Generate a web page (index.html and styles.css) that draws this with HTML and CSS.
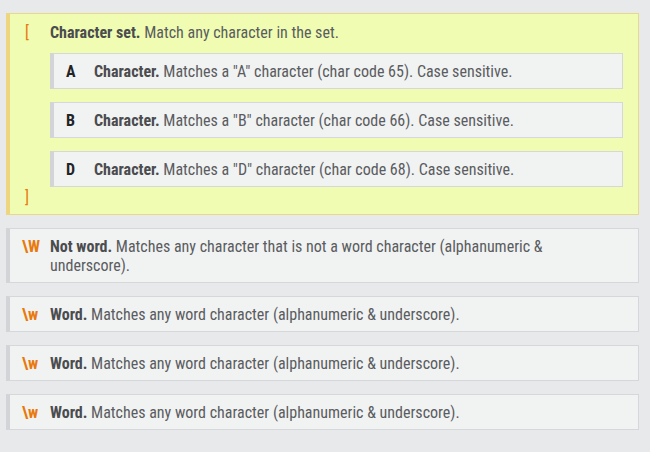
FILE: index.html
```html
<!DOCTYPE html>
<html>
<head>
<meta charset="utf-8">
<link rel="stylesheet" href="styles.css">
</head>
<body>
<div class="panel">
  <div class="token set">
    <div class="row">
      <span class="lbl sym">[</span>
      <span class="desc"><b>Character set.</b> Match any character in the set.</span>
    </div>
    <div class="children">
      <div class="token">
        <div class="row">
          <span class="lbl chr">A</span>
          <span class="desc"><b>Character.</b> Matches a "A" character (char code 65). Case sensitive.</span>
        </div>
      </div>
      <div class="token">
        <div class="row">
          <span class="lbl chr">B</span>
          <span class="desc"><b>Character.</b> Matches a "B" character (char code 66). Case sensitive.</span>
        </div>
      </div>
      <div class="token">
        <div class="row">
          <span class="lbl chr">D</span>
          <span class="desc"><b>Character.</b> Matches a "D" character (char code 68). Case sensitive.</span>
        </div>
      </div>
    </div>
    <div class="row close">
      <span class="lbl sym">]</span>
    </div>
  </div>
  <div class="token top">
    <div class="row">
      <span class="lbl sym">\W</span>
      <span class="desc"><b>Not word.</b> Matches any character that is not a word character (alphanumeric &amp; underscore).</span>
    </div>
  </div>
  <div class="token top">
    <div class="row">
      <span class="lbl sym">\w</span>
      <span class="desc"><b>Word.</b> Matches any word character (alphanumeric &amp; underscore).</span>
    </div>
  </div>
  <div class="token top">
    <div class="row">
      <span class="lbl sym">\w</span>
      <span class="desc"><b>Word.</b> Matches any word character (alphanumeric &amp; underscore).</span>
    </div>
  </div>
  <div class="token top">
    <div class="row">
      <span class="lbl sym">\w</span>
      <span class="desc"><b>Word.</b> Matches any word character (alphanumeric &amp; underscore).</span>
    </div>
  </div>
</div>
</body>
</html>
```

FILE: styles.css
```css
html, body {
  margin: 0;
  padding: 0;
  background: #e8e9ea;
}
body {
  font-family: "Roboto Condensed", "Liberation Sans Narrow", "Roboto", sans-serif;
  font-size: 16px;
  line-height: 19px;
  color: #5a5c5f;
}
.panel {
  padding: 13px 11px 20px 6px;
  display: flex;
  flex-direction: column;
  gap: 13px;
}
.token {
  background: #f1f2f2;
  border: 1px solid #d5d7da;
  border-left: 4px solid #d2d4d7;
  padding: 8px 16px 7px 12px;
}
.token.set {
  background: #effcb1;
  border-color: #e6d98a;
  border-left: 4px solid #eed680;
  padding: 9px 15px 7px 15px;
}
.row {
  display: flex;
  align-items: flex-start;
}
.lbl {
  flex: 0 0 auto;
  width: 28px;
  font-weight: 700;
}
.sym {
  color: #e8790c;
}
.set > .row > .sym {
  font-weight: 400;
  width: 25px;
}
.chr {
  color: #222426;
  width: 28px;
}
.desc b {
  color: #4a4c4f;
  font-weight: 700;
}
.children {
  margin: 11px 0 1px 25px;
  display: flex;
  flex-direction: column;
  gap: 13px;
}
```
